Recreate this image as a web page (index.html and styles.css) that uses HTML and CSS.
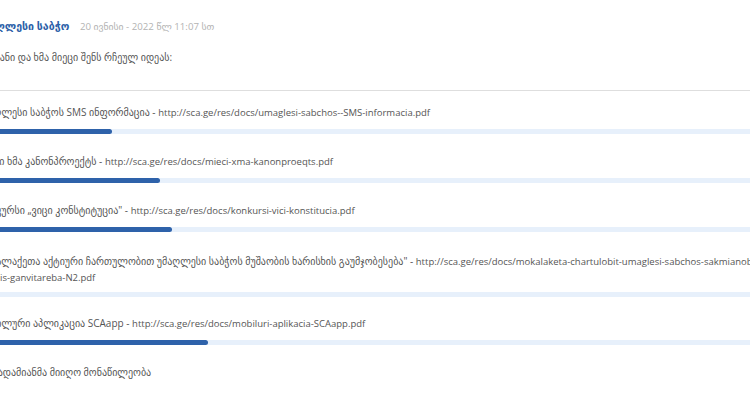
FILE: index.html
```html
<!DOCTYPE html>
<html lang="ka">
<head>
	<meta charset="UTF-8">
	<title>გამოკითხვა</title>
	<link rel="stylesheet" href="styles.css">
</head>
<body>
	<div class="poll">
		<div class="poll-head">
			<span class="author">უმაღლესი საბჭო</span>
			<span class="date">20 ივნისი - 2022 წლ 11:07 სთ</span>
		</div>
		<p class="question">გაეცანი და ხმა მიეცი შენს რჩეულ იდეას:</p>

		<ul class="answers">
			<li>
				<p>უმაღლესი საბჭოს SMS ინფორმაცია - <span class="link">http://sca.ge/res/docs/umaglesi-sabchos--SMS-informacia.pdf</span></p>
				<div class="bar"><span style="width: 17.2%"></span></div>
			</li>
			<li>
				<p>მიეცი ხმა კანონპროექტს - <span class="link">http://sca.ge/res/docs/mieci-xma-kanonproeqts.pdf</span></p>
				<div class="bar"><span style="width: 23.4%"></span></div>
			</li>
			<li>
				<p>კონკურსი „ვიცი კონსტიტუცია" - <span class="link">http://sca.ge/res/docs/konkursi-vici-konstitucia.pdf</span></p>
				<div class="bar"><span style="width: 25%"></span></div>
			</li>
			<li class="long">
				<p>მოქალაქეთა აქტიური ჩართულობით უმაღლესი საბჭოს მუშაობის ხარისხის გაუმჯობესება" - <span class="link">http://sca.ge/res/docs/mokalaketa-chartulobit-umaglesi-sabchos-sakmianob<wbr>is-ganvitareba-N2.pdf</span></p>
				<div class="bar"><span style="width: 0%"></span></div>
			</li>
			<li>
				<p>მობილური აპლიკაცია SCAapp - <span class="link">http://sca.ge/res/docs/mobiluri-aplikacia-SCAapp.pdf</span></p>
				<div class="bar"><span style="width: 29.6%"></span></div>
			</li>
		</ul>

		<p class="total">138 ადამიანმა მიიღო მონაწილეობა</p>
	</div>
</body>
</html>
```

FILE: styles.css
```css
* {
	margin: 0;
	padding: 0;
}
html, body {
	overflow: hidden;
}
body {
	background-color: #fff;
	color: #555;
	font-family: "Open Sans", "DejaVu Sans", sans-serif;
	font-size: 10px;
	line-height: 16px;
}

/* the block is wider than the window, it is cut on both sides */
.poll {
	margin-left: -22px;
	margin-right: -5px;
	padding-top: 18px;
}

.poll-head .author {
	color: #2c5fa8;
	font-weight: bold;
	font-size: 10.6px;
}
.poll-head .date {
	color: #b3b3b3;
	font-size: 9.7px;
	margin-left: 8px;
}

.question {
	margin-top: 14px;
	padding-bottom: 25px;
	border-bottom: 1px solid #dedede;
}

.answers {
	list-style: none;
	padding-top: 13px;
}
.answers li {
	margin-bottom: 19px;
}
.answers li.long {
	margin-bottom: 18px;
}
.answers li.long p {
	padding-top: 2px;
}
.answers li.long .bar {
	margin-top: 7px;
}
.answers p {
	padding-left: 22px;
	text-indent: -22px;
}
.answers .link {
	font-size: 9.5px;
	line-height: 1;
}

.bar {
	height: 5px;
	margin-top: 9px;
	border-radius: 3px;
	background-color: #e7f0fb;
}
.bar span {
	display: block;
	height: 100%;
	border-radius: 3px;
	background-color: #2e62aa;
}
```
